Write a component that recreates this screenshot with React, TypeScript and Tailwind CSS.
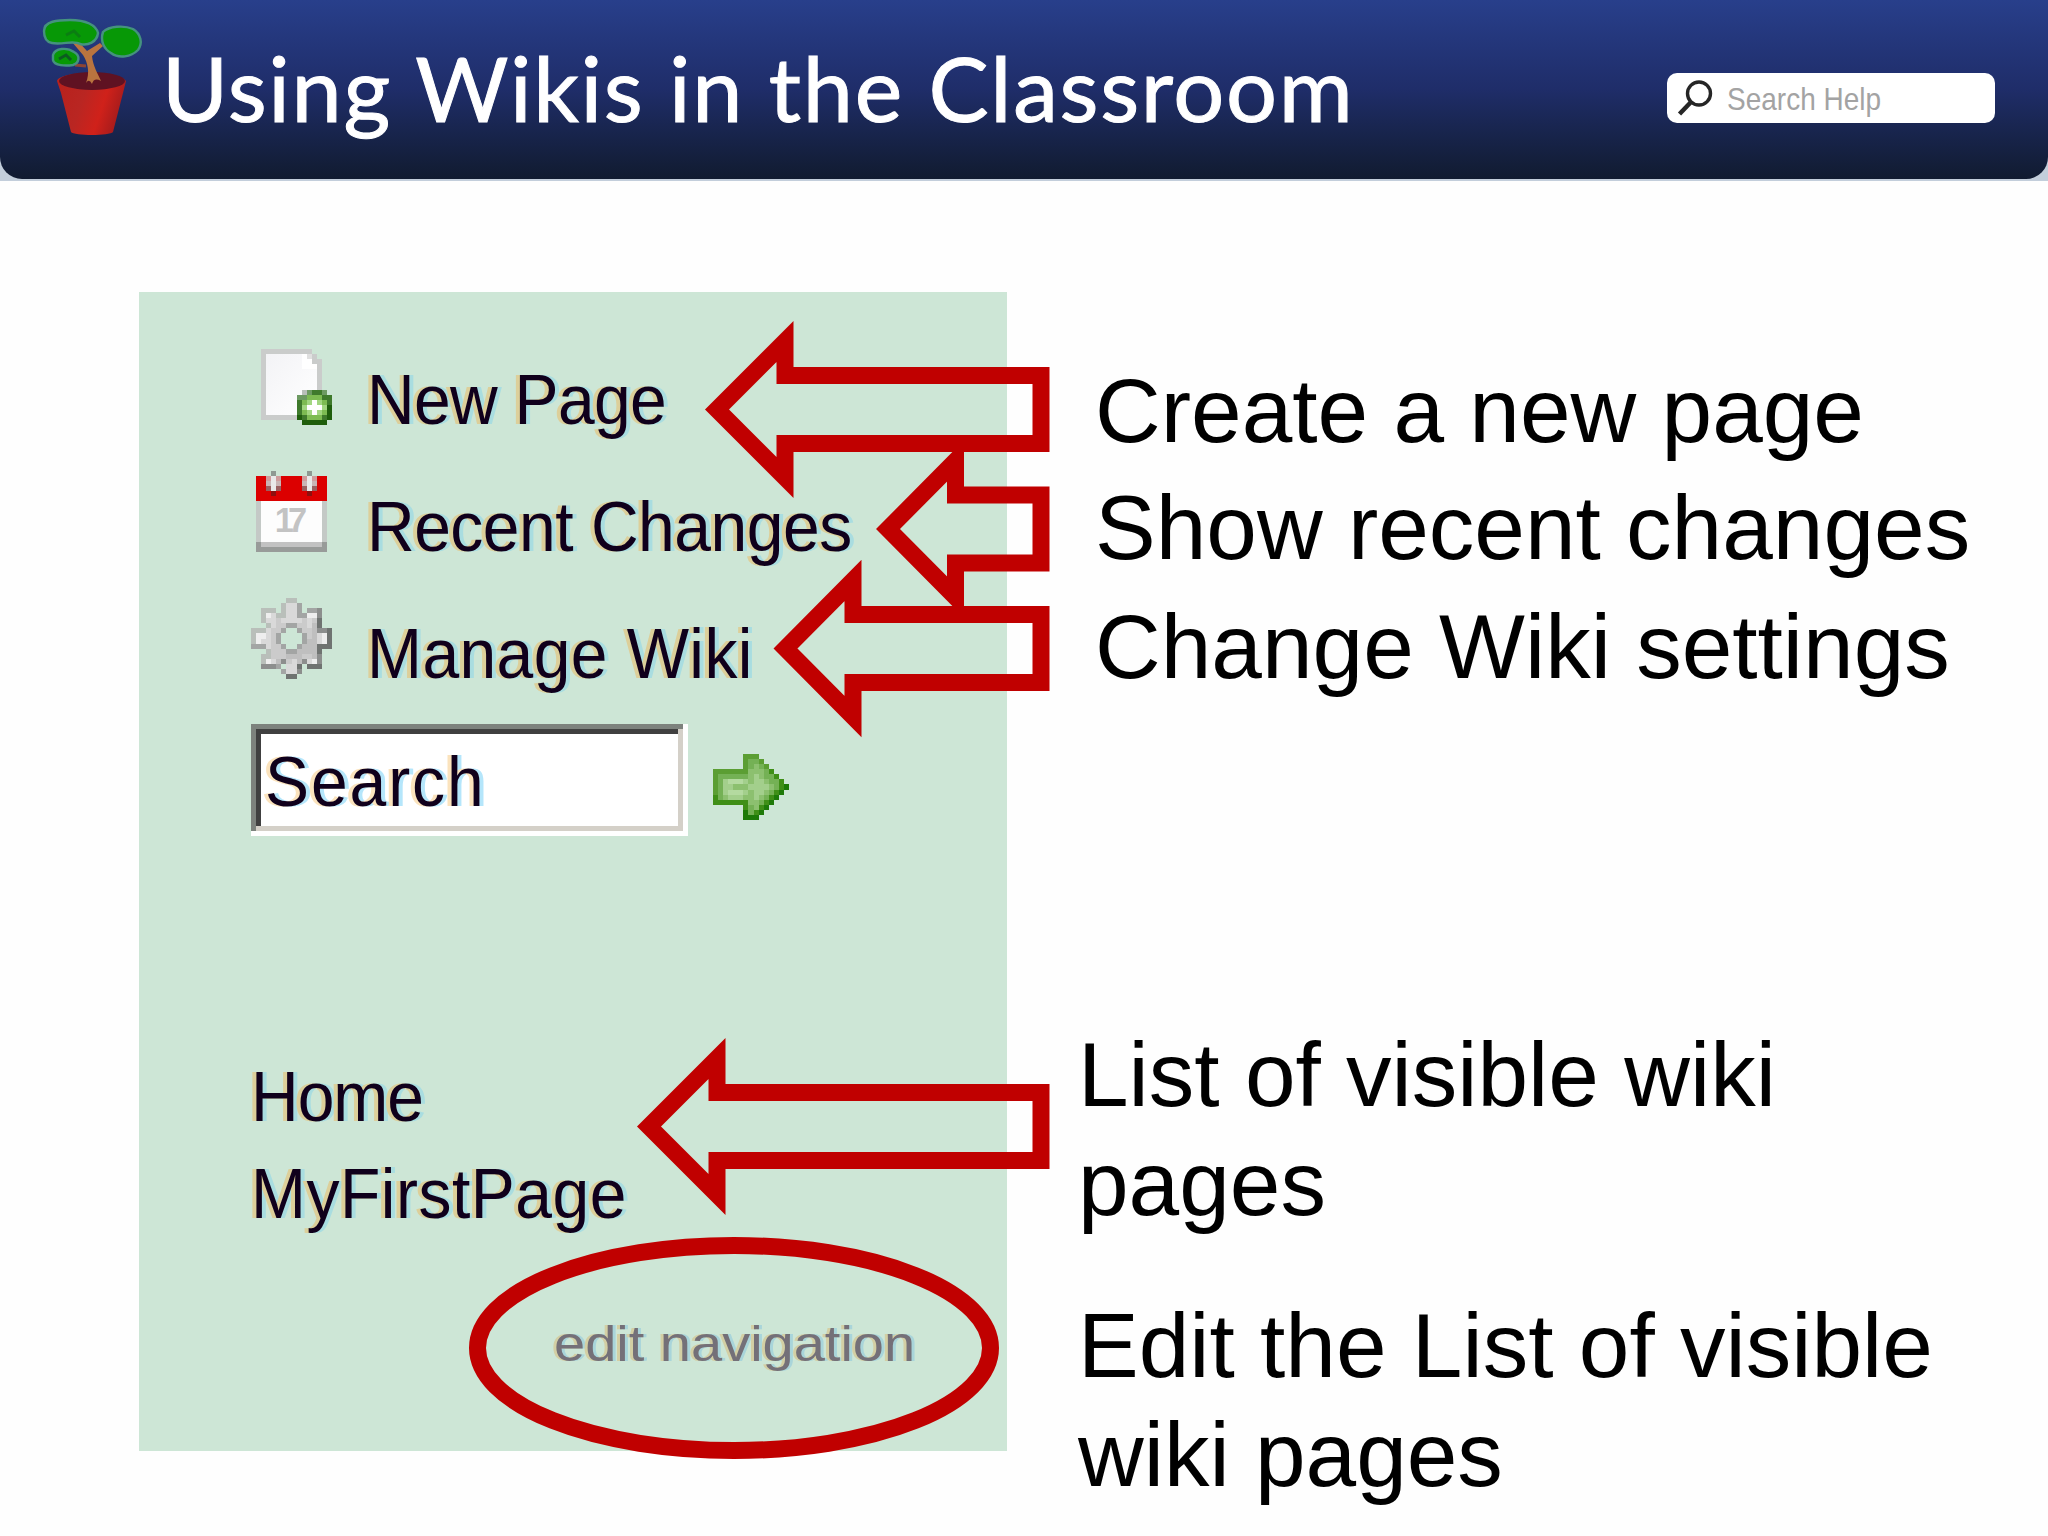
import type { ReactNode } from 'react'
import { clsx } from 'clsx'

const palette: Record<string, string> = {
  a: '#b9bfba',
  b: '#a3a5a4',
  c: '#8c8e8d',
  d: '#6f7371',
  l: '#d9d9d9',
  m: '#cbcbcb',
  n: '#bfbfbf',
  w: '#eeeeee',
  // arrow greens
  G: '#5b9e33',
  H: '#3f8f17',
  I: '#1d7a08',
  J: '#8cc06f',
  K: '#a3cf8c',
  L: '#74b155',
  M: '#b4daa0',
  // badge greens
  P: '#6d9a62',
  Q: '#3f7a2c',
  R: '#1f5e0c',
  S: '#7dbb52',
  T: '#a2d681',
  W: '#ffffff',
}

const gearRows = [
  '.......aa.......',
  '......allb......',
  '..aaa.allb.bbc..',
  '..awlaallbbwwc..',
  '..allmllllmlmd..',
  '...almmbbmmlnd..',
  'aaalmmb..bmmnccd',
  'awwlmb....bmnlwd',
  'awllmb....bnnlwd',
  'bbblmmb..bnnnddd',
  '...ammmbbnnnnd..',
  '..aammmnnnmmnc..',
  '..awlncmlnclwc..',
  '..cccb.lld.ddd..',
  '......bllc......',
  '.......dd.......',
]

const goRows = [
  '......GGG......',
  '......GLLG.....',
  '......GLJLG....',
  'GGGGGGGJJJLH...',
  'GLLLLLLJKJLLH..',
  'GLKMMMKJKKJLLH.',
  'GLKKJJJKKKKJLHI',
  'GLKMMMKJKKJLHI.',
  'HLJKKKJJKJLHI..',
  'HHHHHHHJJLHI...',
  '......HLJHI....',
  '......ILHI.....',
  '......III......',
]

const badgeRows = [
  '.aPQQP.',
  'PPSSSQQ',
  'QSTWTSQ',
  'QTWWWTR',
  'QSTWTSR',
  'RQSSSQR',
  '.RRRRR.',
]

function Pixels({ rows, x = 0, y = 0 }: { rows: string[]; x?: number; y?: number }) {
  return (
    <g shapeRendering="crispEdges">
      {rows.flatMap((row, r) =>
        row.split('').map((cell, c) =>
          cell === '.' ? null : (
            <rect key={`${r}-${c}`} x={x + c} y={y + r} width="1" height="1" fill={palette[cell]} />
          ),
        ),
      )}
    </g>
  )
}

function PageIcon() {
  return (
    <svg viewBox="0 0 16 16" className="mt-[6px] size-[81px] shrink-0">
      <defs>
        <linearGradient id="sheet" x1="0" y1="0" x2="1" y2="1">
          <stop offset="0" stopColor="#f3f3f6" />
          <stop offset="1" stopColor="#ffffff" />
        </linearGradient>
      </defs>
      <g shapeRendering="crispEdges">
        <path d="M2 1h10v1h1v1h1v12H2z" fill="#cacccb" />
        <path d="M3 2h8v3h2v9H3z" fill="url(#sheet)" />
        <path d="M10 2h1v1h1v1h1v1h-3z" fill="#ffffff" />
        <path d="M11 2h1v1h-1z" fill="#e0e0e0" />
      </g>
      <Pixels rows={badgeRows} x={9} y={9} />
    </svg>
  )
}

function CalendarIcon() {
  return (
    <svg viewBox="0 0 16 16" className="mt-[6px] size-[81px] shrink-0">
      <g shapeRendering="crispEdges">
        <rect x="1" y="1" width="14" height="5" fill="#dc0000" />
        <rect x="1" y="6" width="14" height="8" fill="#c4c9c6" />
        <rect x="2" y="6" width="12" height="8" fill="#fdfdfd" />
        <rect x="1" y="14" width="14" height="2" fill="#989b99" />
        <rect x="2" y="14" width="12" height="1" fill="#c2c2c2" />
        {[3, 10].map(x => (
          <g key={x}>
            <rect x={x + 1} y="0" width="1" height="1" fill="#8f9992" />
            <rect x={x} y="1" width="3" height="2" fill="#cf9c9c" />
            <rect x={x} y="2" width="3" height="1" fill="#c9b5b5" />
            <rect x={x + 1} y="1" width="1" height="3" fill="#e9e9e9" />
            <rect x={x} y="3" width="1" height="1" fill="#9a6060" />
            <rect x={x + 2} y="3" width="1" height="1" fill="#9a6060" />
            <rect x={x + 1} y="4" width="1" height="1" fill="#8e1010" />
          </g>
        ))}
      </g>
      <text x="7.9" y="12" textAnchor="middle" fontSize="6.8" textLength="6.4" fontWeight="700" fill="#c3c3c3" className="font-['Liberation_Sans',sans-serif]">
        17
      </text>
    </svg>
  )
}

function GearIcon() {
  return (
    <svg viewBox="0 0 16 16" className="mt-[6px] size-[81px] shrink-0">
      <Pixels rows={gearRows} />
    </svg>
  )
}

function PlantLogo() {
  return (
    <svg viewBox="0 0 130 140" className="ml-[30px] mt-[5px] h-[140px] w-[130px] shrink-0">
      <defs>
        <linearGradient id="pot" x1="0" y1="0" x2="1" y2="0.3">
          <stop offset="0" stopColor="#b8201c" />
          <stop offset="0.45" stopColor="#b92622" />
          <stop offset="0.75" stopColor="#d0211a" />
          <stop offset="1" stopColor="#a81c1c" />
        </linearGradient>
      </defs>
      <path d="M27 76C30 66 88 65 96 76L93 88L83 127C80 131 44 131 41 127L31 88Z" fill="url(#pot)" />
      <ellipse cx="62" cy="76" rx="33" ry="9" fill="#5f1222" />
      <path d="M56 78C60 68 58 58 53 50L42 37L46 34L57 46L70 38L73 41L62 51C63 61 68 69 71 76Q64 72 62 79Q59 73 56 78Z" fill="#b9743f" />
      <path d="M45 60L56 61" stroke="#8d4434" strokeWidth="3" />
      <path d="M14 26C14 16 28 15 40 15C56 15 66 20 68 28C67 37 58 41 50 39C44 35 32 40 22 38C16 37 14 32 14 26Z" fill="#079806" stroke="#45927f" strokeWidth="2.4" />
      <path d="M36 30L44 26L50 32" fill="none" stroke="#0b7d12" strokeWidth="3" />
      <path d="M73 27C79 21 94 20 103 24C111 29 113 38 108 45C101 52 89 54 81 48C74 44 70 36 73 27Z" fill="#079806" stroke="#45927f" strokeWidth="2.4" />
      <path d="M23 50C25 43 37 42 44 47C51 51 49 58 43 60C36 61 24 61 23 55Z" fill="#079806" stroke="#45927f" strokeWidth="2.4" />
      <path d="M29 54L36 50L41 55" fill="none" stroke="#0c5c20" strokeWidth="3" />
    </svg>
  )
}

function NavLabel({ className, children }: { className?: string; children: ReactNode }) {
  return (
    <span
      className={clsx(
        'scale-y-[1.08] whitespace-nowrap text-[66px] text-[#10001c] [text-shadow:-4px_0_0_#dccf9a,4px_0_0_#a9dde0]',
        className,
      )}
    >
      {children}
    </span>
  )
}

const navItems = [
  { label: 'New Page', icon: <PageIcon />, tracking: 'tracking-[-0.7px]' },
  { label: 'Recent Changes', icon: <CalendarIcon />, tracking: 'tracking-[-0.5px]' },
  { label: 'Manage Wiki', icon: <GearIcon />, tracking: 'tracking-[0.4px]' },
]

// Tip x, head x and centre line of every callout arrow; all shafts end at 1041.
const arrows = [
  { tip: 717, head: 785, y: 409.5 },
  { tip: 888, head: 955.5, y: 529 },
  { tip: 785.5, head: 853, y: 648.5 },
  { tip: 649, head: 717, y: 1126.5 },
]

function Callouts() {
  return (
    <svg viewBox="0 0 2048 1536" className="pointer-events-none absolute inset-0 h-[1536px] w-[2048px]" fill="none" stroke="#c00000" strokeWidth="17">
      {arrows.map(({ tip, head, y }) => (
        <path
          key={y}
          d={`M${tip} ${y}L${head} ${y - 68}V${y - 34}H1041V${y + 34}H${head}V${y + 68}Z`}
          strokeMiterlimit="8"
        />
      ))}
      <ellipse cx="734" cy="1348" rx="256.5" ry="102.5" />
    </svg>
  )
}

export default function App() {
  return (
    <main className="relative h-[1536px] w-[2048px] overflow-hidden bg-[#fefefe] font-['Liberation_Sans',Arial,sans-serif] text-black">
      <header className="h-[181px] bg-[#c3cedb]">
        <div className="flex h-[179px] items-start rounded-b-[22px] bg-linear-to-b from-[#283f8b] via-[#1f2d69] via-50% to-[#111b30]">
          <PlantLogo />
          <h1 className="ml-[2px] mt-[27px] w-[1298px] whitespace-nowrap font-['Lato',sans-serif] text-[90px] leading-[120px] tracking-[1.65px] text-white [-webkit-text-stroke:1px_white]">
            Using Wikis in the Classroom
          </h1>
          <div className="ml-[207px] mt-[73px] flex h-[50px] w-[328px] items-center rounded-[10px] bg-white">
            <svg viewBox="0 0 40 40" className="ml-[9px] size-10 shrink-0" fill="none" stroke="#262626">
              <circle cx="23" cy="15.5" r="11.5" strokeWidth="3.4" />
              <path d="M15 24L3.5 36" strokeWidth="4.5" />
            </svg>
            <span className="ml-[11px] mt-[3px] scale-y-[1.1] text-[28px] leading-[50px] text-[#a3a3a3]">Search Help</span>
          </div>
        </div>
      </header>

      <div className="flex">
        <nav className="ml-[139px] mt-[111px] h-[1159px] w-[868px] shrink-0 bg-[#cde6d6] pl-[112px] pt-[46px]">
          {navItems.map(item => (
            <div key={item.label} className="flex h-[127px] items-start gap-[35px]">
              {item.icon}
              <NavLabel className={clsx('origin-[0_86px] leading-[127px]', item.tracking)}>{item.label}</NavLabel>
            </div>
          ))}

          <div className="mt-[5px] flex items-start">
            <div className="h-[112px] w-[437px] bg-white pl-[14px] pt-[10px] shadow-[inset_-5px_-5px_0_#ffffff,inset_5px_5px_0_#7d827d,inset_-10px_-10px_0_#d4d0c8,inset_10px_10px_0_#404040]">
              <span className="inline-block origin-[0_72px] scale-y-[1.08] text-[66px] leading-[98px] tracking-[1.9px] text-[#10001c] [text-shadow:-4px_0_0_#fbe3bd,4px_0_0_#b5e6fb]">
                Search
              </span>
            </div>
            <svg viewBox="0 0 15 13" className="ml-[25px] mt-[30px] h-[66px] w-[76px]">
              <Pixels rows={goRows} />
            </svg>
          </div>

          <div className="mt-[214px] flex flex-col items-start">
            <NavLabel className="origin-[0_71px] leading-[96px] tracking-[-1px]">Home</NavLabel>
            <NavLabel className="mt-px origin-[0_71px] leading-[96px] tracking-[0.5px]">MyFirstPage</NavLabel>
          </div>

          <p className="ml-[303px] mt-[59px] origin-[0_59px] scale-y-[0.9] whitespace-nowrap text-[56px] leading-[80px] text-[#747078] [text-shadow:-3px_0_0_#d3cfa4,3px_0_0_#a9d5da]">
            edit navigation
          </p>
        </nav>

        <section className="flex flex-col whitespace-nowrap pl-[71px] pt-[171px] text-[91px]">
          <div className="pl-[17px] leading-[118px]">
            <p>Create a new page</p>
            <p className="-mt-px">Show recent changes</p>
            <p className="mt-px">Change Wiki settings</p>
          </div>
          <p className="mt-[314px] leading-[109px]">
            List of visible wiki
            <br />
            pages
          </p>
          <p className="mt-[53px] leading-[109px]">
            Edit the List of visible
            <br />
            wiki pages
          </p>
        </section>
      </div>

      <Callouts />
    </main>
  )
}
